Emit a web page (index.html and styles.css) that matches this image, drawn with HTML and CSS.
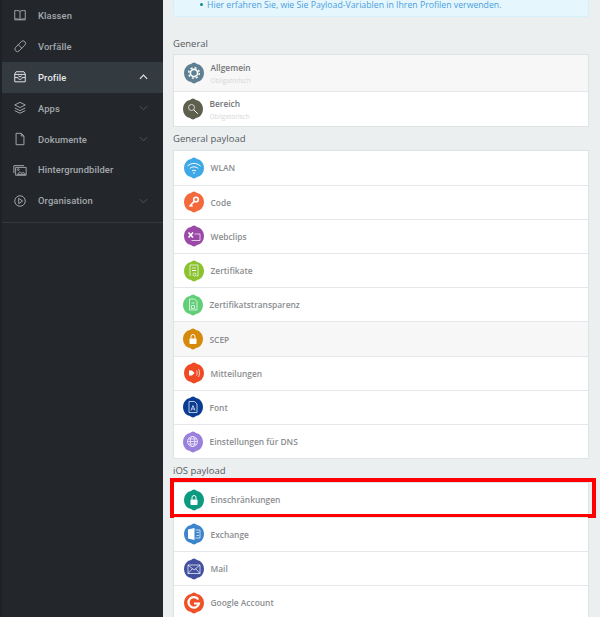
FILE: index.html
```html
<!DOCTYPE html>
<html lang="de">
<head>
<meta charset="utf-8">
<title>Profile</title>
<link rel="stylesheet" href="styles.css">
</head>
<body>
<svg class="defs" width="0" height="0" aria-hidden="true">
  <defs>
    <symbol id="shape" viewBox="0 0 20 22">
      <path d="M10 .6c1.200 0 2 .9 3 1.400 1 .5 2.200.5 3.200 1.200C18 4.500 19.700 6.800 19.900 10c.1 1 .1 1.500 0 2-.2 3.200-1.900 5.500-3.700 6.800-1 .7-2.200.7-3.200 1.200s-1.800 1.400-3 1.400-2-.9-3-1.400-2.200-.5-3.200-1.200C2 17.500.3 15.200.1 12c-.1-.5-.1-1 0-2C.3 6.800 2 4.500 3.800 3.200c1-.7 2.200-.7 3.200-1.200s1.800-1.400 3-1.400z"/>
    </symbol>
  </defs>
</svg>
<div class="app">
  <aside class="sidebar">
    <nav class="nav">
      <a class="nav-item"><svg class="nav-icon" viewBox="0 0 16 16"><path d="M8 4C7 3 5 2.800 2 3v9.500c3-.2 5 0 6 1 1-1 3-1.200 6-1V3c-3-.2-5 0-6 1zM8 4v9.500M1.500 13.500h13"/></svg><span>Klassen</span></a>
      <a class="nav-item"><svg class="nav-icon" viewBox="0 0 16 16"><path d="M3 9.500 9.500 3a2.800 2.800 0 0 1 4 4L7 13.500a2.800 2.800 0 0 1-4-4zM6 6.500l4 4"/></svg><span>Vorfälle</span></a>
      <a class="nav-item active"><svg class="nav-icon" viewBox="0 0 16 16"><path d="M3.500 2h9l1.500 2.500v9H2v-9zM2 5h12M2 8.500h3.500c0 3 5 3 5 0H14M6 6.500l2 1.500 2-1.500"/></svg><span>Profile</span><svg class="chev" viewBox="0 0 10 6"><path d="M1 5l4-4 4 4"/></svg></a>
      <a class="nav-item"><svg class="nav-icon" viewBox="0 0 16 16"><path d="M8 1.500l6 3-6 3-6-3zM2 8l6 3 6-3M2 11l6 3 6-3"/></svg><span>Apps</span><svg class="chev" viewBox="0 0 10 6"><path d="M1 1l4 4 4-4"/></svg></a>
      <a class="nav-item"><svg class="nav-icon" viewBox="0 0 16 16"><path d="M3.500 1.500h6l3 3v10h-9zM9.500 1.500v3h3"/></svg><span>Dokumente</span><svg class="chev" viewBox="0 0 10 6"><path d="M1 1l4 4 4-4"/></svg></a>
      <a class="nav-item"><svg class="nav-icon" viewBox="0 0 16 16"><path d="M1 11.500V3h11.500M3 14V5h12v9zM5 13l3-3 2 2 1.500-1.500L14 13z"/><circle cx="6" cy="7.500" r="1"/></svg><span>Hintergrundbilder</span></a>
      <a class="nav-item"><svg class="nav-icon" viewBox="0 0 16 16"><circle cx="8" cy="8" r="6"/><path d="M6.500 5v6L11 8z"/></svg><span>Organisation</span><svg class="chev" viewBox="0 0 10 6"><path d="M1 1l4 4 4-4"/></svg></a>
    </nav>
  </aside>
  <main class="content">
    <div class="info">
      <ul class="info-list"><li><a>Hier erfahren Sie, wie Sie Payload-Variablen in Ihren Profilen verwenden.</a></li></ul>
    </div>

    <h2 class="group-title first">General</h2>
    <div class="card">
      <div class="row tall shaded">
        <svg class="badge c-slate"><use href="#shape"/></svg>
        <svg class="glyph" viewBox="0 0 20 22"><circle cx="10" cy="11" r="3.600" stroke-width="1.600"/><circle cx="10" cy="11" r="5.300" stroke-dasharray="2 2.160" stroke-width="1.500"/></svg>
        <div class="labels"><strong>Allgemein</strong><small>Obligatorisch</small></div>
      </div>
      <div class="row tall tight">
        <svg class="badge c-olive"><use href="#shape"/></svg>
        <svg class="glyph" viewBox="0 0 20 22"><circle class="thin" cx="8.500" cy="9.500" r="3"/><path d="M10.800 11.800l4 4"/></svg>
        <div class="labels"><strong>Bereich</strong><small>Obligatorisch</small></div>
      </div>
    </div>

    <h2 class="group-title">General payload</h2>
    <div class="card">
      <div class="row">
        <svg class="badge c-sky"><use href="#shape"/></svg>
        <svg class="glyph" viewBox="0 0 20 22"><path d="M3.500 9c3.800-3.400 9.200-3.400 13 0M5.800 11.500c2.500-2.200 5.900-2.200 8.400 0M8 14c1.200-1 2.800-1 4 0"/><circle class="fill" cx="10" cy="16" r=".8"/></svg>
        <strong>WLAN</strong>
      </div>
      <div class="row">
        <svg class="badge c-orange"><use href="#shape"/></svg>
        <svg class="glyph thick" viewBox="0 0 20 22"><circle cx="12" cy="8.500" r="2.300"/><path d="M10 10.500l-4.500 5M7 14l1.500 1.500"/></svg>
        <strong>Code</strong>
      </div>
      <div class="row">
        <svg class="badge c-purple"><use href="#shape"/></svg>
        <svg class="glyph" viewBox="0 0 20 22"><path class="thick" d="M4.500 7.500l4.500 5M9 7.500l-4.500 5"/><path class="thin" d="M10.500 9h5.500v6.500H7.500"/></svg>
        <strong>Webclips</strong>
      </div>
      <div class="row">
        <svg class="badge c-lime"><use href="#shape"/></svg>
        <svg class="glyph" viewBox="0 0 20 22"><path class="thin" d="M6 16V5h8v11h-1.500M8 8h4"/><path d="M8 10.500h4"/><circle class="thin" cx="10.500" cy="14.500" r="1.500"/></svg>
        <strong>Zertifikate</strong>
      </div>
      <div class="row tight">
        <svg class="badge c-green"><use href="#shape"/></svg>
        <svg class="glyph" viewBox="0 0 20 22"><path class="thin" d="M6.500 16V5h5l2.500 2.500V16zM8.500 9h3M8.500 11.500h3v3h-3z"/></svg>
        <strong>Zertifikatstransparenz</strong>
      </div>
      <div class="row shaded tight">
        <svg class="badge c-amber"><use href="#shape"/></svg>
        <svg class="glyph" viewBox="0 0 20 22"><rect class="fill" x="6.500" y="10.500" width="7" height="5.500" rx=".7"/><path d="M8 10.500V8.500a2 2 0 0 1 4 0v2"/></svg>
        <strong>SCEP</strong>
      </div>
      <div class="row">
        <svg class="badge c-red"><use href="#shape"/></svg>
        <svg class="glyph" viewBox="0 0 20 22"><path class="fill" d="M5 8.500h3l2.500 2.500L8 13.500H5z"/><path class="thin" d="M12.500 8.500c.8 1.500.8 3.500 0 5M14.500 7c1.300 2.500 1.300 5.500 0 8"/></svg>
        <strong>Mitteilungen</strong>
      </div>
      <div class="row tight">
        <svg class="badge c-navy"><use href="#shape"/></svg>
        <svg class="glyph" viewBox="0 0 20 22"><path class="thin" d="M6 5.500h5.500L14 8v8.500H6zM8 14.500l2-5 2 5M8.700 13h2.600"/></svg>
        <strong>Font</strong>
      </div>
      <div class="row tight">
        <svg class="badge c-violet"><use href="#shape"/></svg>
        <svg class="glyph" viewBox="0 0 20 22"><g class="thin"><circle cx="9.500" cy="10.500" r="5"/><ellipse cx="9.500" cy="10.500" rx="2.200" ry="5"/><path d="M4.500 10.500h10M5.200 8h8.600M5.200 13h8.600"/></g></svg>
        <strong>Einstellungen für DNS</strong>
      </div>
    </div>

    <h2 class="group-title third">iOS payload</h2>
    <div class="card">
      <div class="row marked">
        <svg class="badge c-teal"><use href="#shape"/></svg>
        <svg class="glyph" viewBox="0 0 20 22"><rect class="fill" x="6.500" y="10.500" width="7" height="5.500" rx=".7"/><path d="M8 10.500V8.500a2 2 0 0 1 4 0v2"/></svg>
        <strong>Einschränkungen</strong>
      </div>
      <div class="row">
        <svg class="badge c-blue"><use href="#shape"/></svg>
        <svg class="glyph" viewBox="0 0 20 22"><path class="fill" d="M4 6.500l6.500-1.500v12L4 15.500z"/><path class="thin" d="M11.500 7H16v8h-4.500M12.500 9.500h2.500M12.500 12.500h2.500"/></svg>
        <strong>Exchange</strong>
      </div>
      <div class="row">
        <svg class="badge c-indigo"><use href="#shape"/></svg>
        <svg class="glyph" viewBox="0 0 20 22"><g class="thin"><path d="M4 7h12v8.500H4zM4 7l6 5 6-5M4 15.500l4.500-5M16 15.500l-4.500-5"/></g></svg>
        <strong>Mail</strong>
      </div>
      <div class="row">
        <svg class="badge c-tomato"><use href="#shape"/></svg>
        <svg class="glyph bold" viewBox="0 0 20 22"><path d="M14.300 7.500A5.300 5.300 0 1 0 15 11.500H10"/></svg>
        <strong>Google Account</strong>
      </div>
    </div>
  </main>
</div>
</body>
</html>
```
FILE: styles.css
```css
* { box-sizing: border-box; }
html, body { margin: 0; height: 100%; overflow: hidden; }
body { background: #ebeff0; font-family: "Open Sans", sans-serif; }
.defs { position: absolute; }
.app { display: flex; height: 617px; width: 600px; }

.sidebar { flex: 0 0 163px; background: #23272b; border-left: 2px solid #1f2225; }
.nav { border-bottom: 1px solid #33383c; padding-bottom: 6px; }
.nav-item { display: flex; align-items: center; height: 30.900px; padding-left: 11px; color: #a4a9ad; font: 500 9.400px "Roboto", sans-serif; letter-spacing: .1px; }
.nav-item span { flex: 1; margin-left: 11px; }
.nav-item.active { background: #333a40; color: #e6e8ea; }
.nav-icon { width: 14px; height: 14px; fill: none; stroke: currentColor; stroke-width: 1.100; }
.chev { width: 9px; height: 6px; margin-right: 15px; fill: none; stroke: #555b60; stroke-width: 1; }
.active .chev { stroke: #e6e8ea; stroke-width: 1.300; }

.content { flex: 1; min-width: 0; padding: 0 11px 0 10px; }
.info { height: 18px; background: #e5f7fd; border: 1px solid #d3f1fa; border-top: 0; border-radius: 0 0 3px 3px; }
.info-list { margin: 0; padding: 0 0 0 33px; list-style: none; }
.info-list li { position: relative; font-size: 8.720px; line-height: 12px; margin-top: -1px; color: #4a9de0; }
.info-list li::before { content: ""; position: absolute; left: -7px; top: 4px; width: 3px; height: 3px; border-radius: 50%; background: #0f8a8f; }

.group-title { margin: 0; font-size: 9.500px; font-weight: 400; line-height: 13px; color: #555c60; padding-top: 4.500px; height: 22.500px; }
.group-title.first { margin-top: 19px; height: 18px; padding-top: 1px; }
.group-title.third { padding-top: 5px; height: 22.500px; }

.card { background: #fff; border: 1px solid #dfe3e5; }
.row { position: relative; display: flex; align-items: center; height: 34.200px; padding-left: 10px; border-top: 1px solid #e4e8ea; font-size: 8.400px; color: #8b8d90; }
.row:first-child { border-top: 0; }
.row.tall { height: 35.500px; }
.row.shaded { background: #f7f7f7; }
.row.tight { padding-left: 9px; }
.row strong { font-weight: 600; margin-left: 6.500px; }
.row.marked::after { content: ""; position: absolute; left: -4px; right: -8px; top: -4.500px; bottom: -1.500px; border: 4px solid #f00; }

.badge { width: 20px; height: 22px; flex: none; }
.glyph { width: 20px; height: 22px; flex: none; margin-left: -20px; fill: none; stroke: #fff; stroke-width: 1; position: relative; }
.glyph .fill { fill: #fff; stroke: none; }
.glyph .thin { stroke-width: .7; }
.glyph .thick, .glyph.thick { stroke-width: 1.600; }
.glyph.bold { stroke-width: 2.200; }

.labels { display: flex; flex-direction: column; margin-left: 6.500px; padding-top: 3.500px; }
.labels strong { margin-left: 0; line-height: 12px; color: #737578; }
.labels small { font-size: 6.500px; line-height: 12px; color: #d5d7d8; margin-top: 1px; }

.c-slate { fill: #5f7f92; } .c-olive { fill: #5f5f4e; } .c-sky { fill: #3fa9e8; }
.c-orange { fill: #f4693b; } .c-purple { fill: #9a4aa6; } .c-lime { fill: #8cc230; }
.c-green { fill: #62cf78; } .c-amber { fill: #d68a0b; } .c-red { fill: #f04a25; }
.c-navy { fill: #0b3c94; } .c-violet { fill: #9a80dd; } .c-teal { fill: #0c9a80; }
.c-blue { fill: #3c85cc; } .c-indigo { fill: #43509f; } .c-tomato { fill: #ee5228; }
```
